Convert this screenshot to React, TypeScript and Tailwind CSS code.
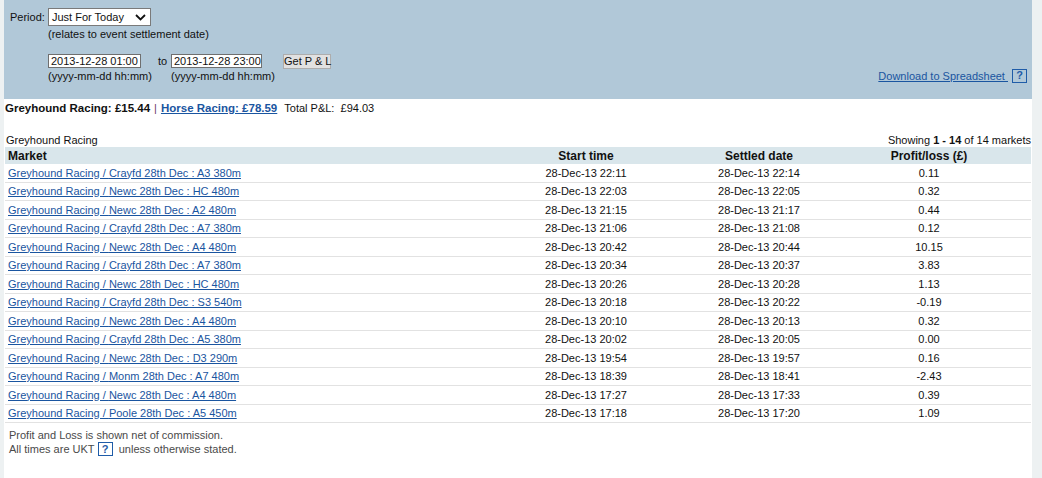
import React from "react";

const rows = [
  ["Crayfd 28th Dec : A3 380m", "28-Dec-13 22:11", "28-Dec-13 22:14", "0.11"],
  ["Newc 28th Dec : HC 480m", "28-Dec-13 22:03", "28-Dec-13 22:05", "0.32"],
  ["Newc 28th Dec : A2 480m", "28-Dec-13 21:15", "28-Dec-13 21:17", "0.44"],
  ["Crayfd 28th Dec : A7 380m", "28-Dec-13 21:06", "28-Dec-13 21:08", "0.12"],
  ["Newc 28th Dec : A4 480m", "28-Dec-13 20:42", "28-Dec-13 20:44", "10.15"],
  ["Crayfd 28th Dec : A7 380m", "28-Dec-13 20:34", "28-Dec-13 20:37", "3.83"],
  ["Newc 28th Dec : HC 480m", "28-Dec-13 20:26", "28-Dec-13 20:28", "1.13"],
  ["Crayfd 28th Dec : S3 540m", "28-Dec-13 20:18", "28-Dec-13 20:22", "-0.19"],
  ["Newc 28th Dec : A4 480m", "28-Dec-13 20:10", "28-Dec-13 20:13", "0.32"],
  ["Crayfd 28th Dec : A5 380m", "28-Dec-13 20:02", "28-Dec-13 20:05", "0.00"],
  ["Newc 28th Dec : D3 290m", "28-Dec-13 19:54", "28-Dec-13 19:57", "0.16"],
  ["Monm 28th Dec : A7 480m", "28-Dec-13 18:39", "28-Dec-13 18:41", "-2.43"],
  ["Newc 28th Dec : A4 480m", "28-Dec-13 17:27", "28-Dec-13 17:33", "0.39"],
  ["Poole 28th Dec : A5 450m", "28-Dec-13 17:18", "28-Dec-13 17:20", "1.09"],
];

function HelpBox() {
  return (
    <span className="inline-flex items-center justify-center w-[15px] h-[14px] border border-[#1f5ca8] text-[#1f5ca8] font-bold text-[11px] leading-none">
      ?
    </span>
  );
}

const cols = "grid grid-cols-[476px_210px_136px_204px]";

export default function App() {
  return (
    <div
      className="flex min-h-[478px] bg-white text-[11px] text-[#111]"
      style={{ fontFamily: '"Liberation Sans", Arial, sans-serif' }}
    >
      <div className="w-[4px] bg-[#edf1f2]" />
      <div className="w-[1028px]">
        {/* filter panel */}
        <div className="h-[99px] bg-[#b1c8d8] pl-[6px] pr-[5px] pt-[8px]">
          <div className="flex items-center h-[18px]">
            <span className="w-[38px]">Period:</span>
            <div className="flex items-center justify-between w-[103px] h-[18px] bg-white border border-[#7a7a7a] pl-[3px] pr-[4px]">
              <span>Just For Today</span>
              <svg width="11" height="7" viewBox="0 0 11 7" fill="none">
                <path d="M1 1l4.5 4.5L10 1" stroke="#111" strokeWidth="1.8" />
              </svg>
            </div>
          </div>
          <div className="ml-[38px] mt-[1px] leading-[14px]">(relates to event settlement date)</div>
          <div className="flex items-end justify-between mt-[12px]">
            <div className="ml-[38px]">
              <div className="flex items-center h-[16px] whitespace-nowrap">
                <div className="w-[93px] h-[14px] bg-white border border-[#6f6f6f] leading-[12px] pl-[2px]">
                  2013-12-28 01:00
                </div>
                <span className="ml-[17px] w-[13px]">to</span>
                <div className="w-[91px] h-[14px] bg-white border border-[#6f6f6f] leading-[12px] pl-[2px]">
                  2013-12-28 23:00
                </div>
                <div className="ml-[21px] w-[48px] h-[15px] bg-[#e1e1e1] border border-[#adadad] leading-[13px] text-center">
                  Get P &amp; L
                </div>
              </div>
              <div className="flex leading-[14px]">
                <span className="w-[123px]">(yyyy-mm-dd hh:mm)</span>
                <span>(yyyy-mm-dd hh:mm)</span>
              </div>
            </div>
            <div className="flex items-center gap-[4px] mb-[-1px]">
              <a className="text-[#1a55a0] underline">Download to Spreadsheet&nbsp;</a>
              <HelpBox />
            </div>
          </div>
        </div>

        {/* totals */}
        <div className="flex items-center h-[19px] pl-[1px] gap-[4px]">
          <span className="font-bold text-[11.5px]">Greyhound Racing: £15.44</span>
          <span className="text-[#6b3a6b]">|</span>
          <a className="font-bold text-[11.5px] text-[#1a55a0] underline">Horse Racing: £78.59</a>
          <span className="ml-[3px] whitespace-pre">Total P&amp;L:  £94.03</span>
        </div>

        {/* caption */}
        <div className="flex justify-between items-center h-[14px] mt-[15px] pl-[2px] pr-[1px]">
          <span>Greyhound Racing</span>
          <span>
            Showing <b>1 - 14</b> of 14 markets
          </span>
        </div>

        <div className="mx-[1px]">
          <div className={`${cols} h-[17px] items-center bg-[#d9e6eb] font-bold text-[12px]`}>
            <span className="pl-[3px]">Market</span>
            <span className="text-center">Start time</span>
            <span className="text-center">Settled date</span>
            <span className="text-center">Profit/loss (£)</span>
          </div>
          {rows.map((r, i) => (
            <div key={i} className={`${cols} h-[18.5px] items-center border-b border-[#e2e2e2]`}>
              <a className="pl-[3px] text-[#1a55a0] underline">Greyhound Racing / {r[0]}</a>
              <span className="text-center">{r[1]}</span>
              <span className="text-center">{r[2]}</span>
              <span className="text-center">{r[3]}</span>
            </div>
          ))}
        </div>

        <div className="mt-[5px] pl-[5px] text-[#4a4a4a] leading-[14px]">
          <div>Profit and Loss is shown net of commission.</div>
          <div className="flex items-center">
            All times are UKT&nbsp;
            <HelpBox />
            &nbsp; unless otherwise stated.
          </div>
        </div>
      </div>
      <div className="flex-1 bg-[#edf1f2]" />
    </div>
  );
}
